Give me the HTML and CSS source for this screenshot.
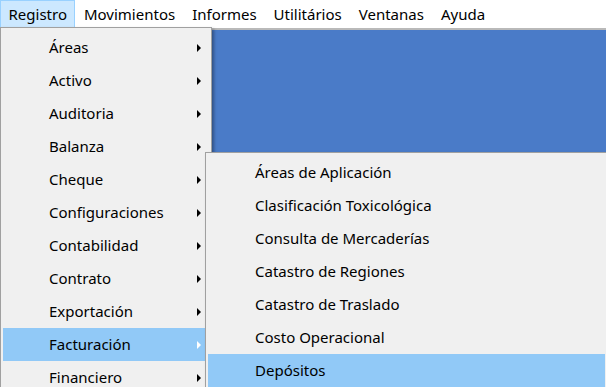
FILE: index.html
```html
<!DOCTYPE html>
<html lang="es">
<head>
  <meta charset="UTF-8">
  <title>Registro</title>
  <link rel="stylesheet" href="styles.css">
</head>
<body>
  <div class="menubar">
    <div class="menubar-item active">Registro</div>
    <div class="menubar-item">Movimientos</div>
    <div class="menubar-item">Informes</div>
    <div class="menubar-item">Utilitários</div>
    <div class="menubar-item">Ventanas</div>
    <div class="menubar-item">Ayuda</div>
  </div>
  <div class="workspace"></div>

  <!-- main dropdown -->
  <div class="dropdown main-menu">
    <div class="menu-item">Áreas<span class="arrow"></span></div>
    <div class="menu-item">Activo<span class="arrow"></span></div>
    <div class="menu-item">Auditoria<span class="arrow"></span></div>
    <div class="menu-item">Balanza<span class="arrow"></span></div>
    <div class="menu-item">Cheque<span class="arrow"></span></div>
    <div class="menu-item">Configuraciones<span class="arrow"></span></div>
    <div class="menu-item">Contabilidad<span class="arrow"></span></div>
    <div class="menu-item">Contrato<span class="arrow"></span></div>
    <div class="menu-item">Exportación<span class="arrow"></span></div>
    <div class="menu-item selected">Facturación<span class="arrow"></span></div>
    <div class="menu-item">Financiero<span class="arrow"></span></div>
  </div>

  <!-- Facturación submenu -->
  <div class="dropdown sub-menu">
    <div class="menu-item">Áreas de Aplicación</div>
    <div class="menu-item">Clasificación Toxicológica</div>
    <div class="menu-item">Consulta de Mercaderías</div>
    <div class="menu-item">Catastro de Regiones</div>
    <div class="menu-item">Catastro de Traslado</div>
    <div class="menu-item">Costo Operacional</div>
    <div class="menu-item selected">Depósitos</div>
  </div>
</body>
</html>
```

FILE: styles.css
```css
/* Basic styling */
body {
  font-family: 'Noto Sans', 'Open Sans', sans-serif;
  font-size: 15px;
  color: #000;
  margin: 0;
  padding: 0;
  height: 387px;
  overflow: hidden;
  display: flex;
  flex-direction: column;
}

.menubar {
  display: flex;
  height: 28px;
  background-color: #ffffff;
  border-bottom: 2px solid #b9b9b9;
}

.menubar-item {
  padding: 0 7.5px;
  line-height: 27px;
  height: 26px;
  border: 1px solid transparent;
}

.menubar-item.active {
  background-color: #cce8ff;
  border-color: #99d1ff;
}

.workspace {
  flex: 1;
  background-color: #4a7bc8;
}

.dropdown {
  position: absolute;
  overflow: hidden;
  background-color: #f0f0f0;
  border: 1px solid #a0a0a0;
  border-bottom: none;
  padding: 3px 2px 0;
  box-shadow: 2px 2px 3px rgba(0, 0, 0, 0.35);
}

.main-menu {
  top: 27px;
  left: 0;
  width: 206px;
  height: 356px;
}

.sub-menu {
  top: 152px;
  left: 205px;
  width: 397px;
  border-right: none;
  height: 231px;
}

.menu-item {
  position: relative;
  height: 33px;
  line-height: 32px;
  padding-left: 46px;
}

.sub-menu .menu-item {
  padding-left: 47px;
}

.menu-item.selected {
  background-color: #91c9f7;
}

.arrow {
  position: absolute;
  right: 8px;
  top: 13px;
  width: 0;
  height: 0;
  border-top: 4px solid transparent;
  border-bottom: 4px solid transparent;
  border-left: 4px solid #000;
}

.selected .arrow {
  border-left-color: #ffffff;
}
```
